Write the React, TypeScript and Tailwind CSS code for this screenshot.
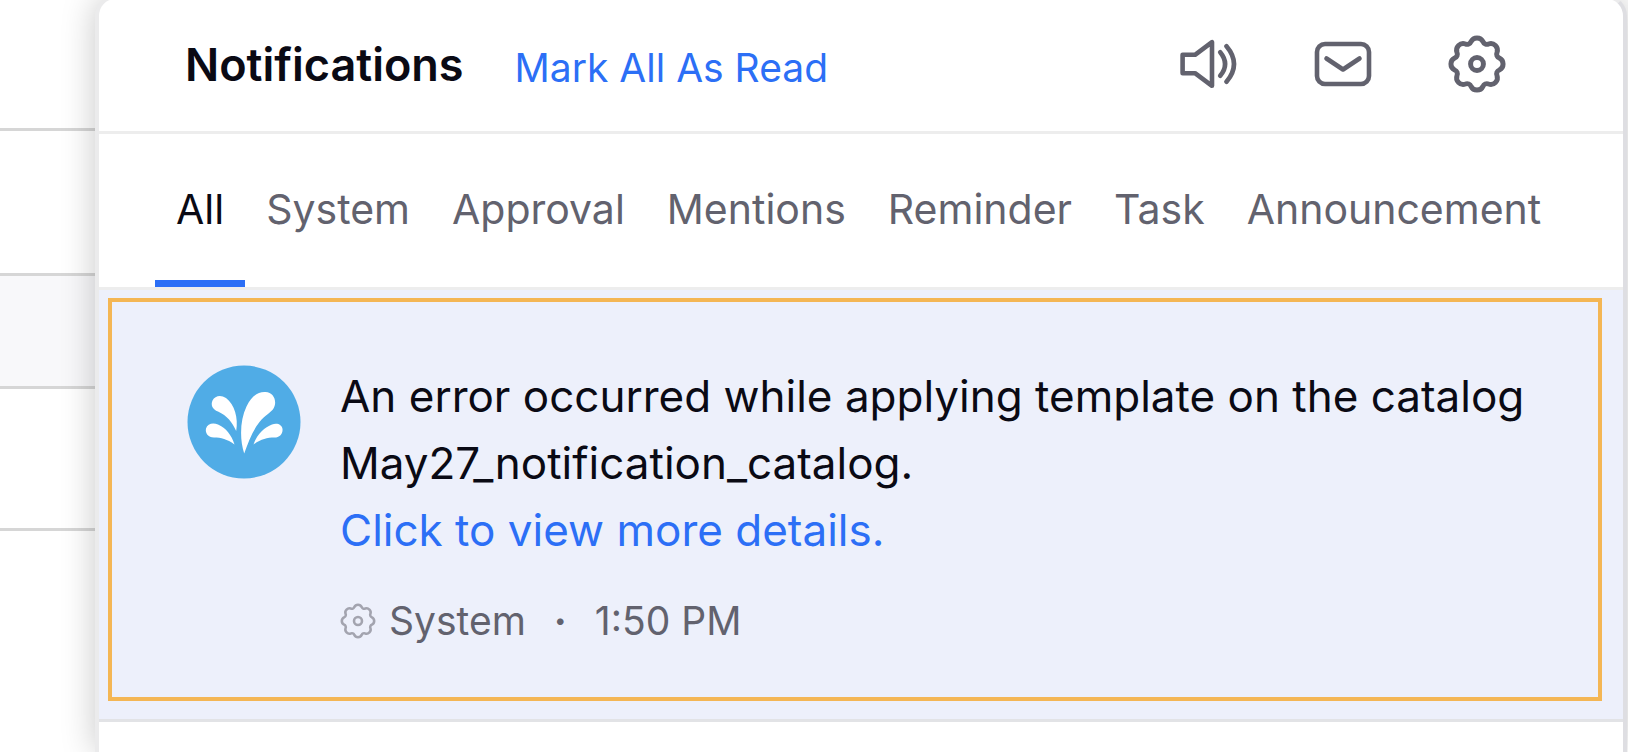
import { useState } from "react";

const tabs = ["All", "System", "Approval", "Mentions", "Reminder", "Task", "Announcement"];

// outline of a gear with eight rounded teeth, centred in a 56x56 box
function gearPath() {
  const point = (deg: number) => {
    const a = (deg * Math.PI) / 180;
    return `${(28 + 22.3 * Math.cos(a)).toFixed(2)} ${(28 + 22.3 * Math.sin(a)).toFixed(2)}`;
  };
  let d = `M${point(-15)}`;
  for (let i = 0; i < 8; i++) {
    d += `A6.4 6.4 0 0 1 ${point(i * 45 + 15)}A4 4 0 0 0 ${point(i * 45 + 30)}`;
  }
  return d + "Z";
}

function GearIcon({ className, strokeWidth = 4.8 }: { className: string; strokeWidth?: number }) {
  return (
    <svg viewBox="0 0 56 56" className={className} fill="none" stroke="currentColor" strokeWidth={strokeWidth} strokeLinejoin="round">
      <path d={gearPath()} />
      <circle cx="28" cy="28" r="6.2" />
    </svg>
  );
}

function SoundIcon() {
  return (
    <svg viewBox="0 0 58 50" className="w-[58px] h-[50px]" fill="none" stroke="currentColor" strokeWidth="4.6" strokeLinecap="round" strokeLinejoin="round">
      <path d="M2.6 15.8H15L32 3.2V46.8L15 34.2H2.6Z" />
      <path d="M40.2 13.2Q50 25 40.2 36.8" />
      <path d="M46.5 7.2Q61.5 25 46.5 42.8" />
    </svg>
  );
}

function MailIcon() {
  return (
    <svg viewBox="0 0 58 46" className="w-[58px] h-[46px]" fill="none" stroke="currentColor" strokeWidth="4.6" strokeLinecap="round" strokeLinejoin="round">
      <rect x="3" y="3" width="52" height="40" rx="8" />
      <path d="M12.5 17.5L29 28.5L45.5 17.5" />
    </svg>
  );
}

function Avatar() {
  return (
    <svg viewBox="0 0 114 114" className="w-[114px] h-[114px] shrink-0" aria-hidden="true">
      <circle cx="57" cy="57" r="56.5" fill="#50ace6" />
      <g fill="#fff">
        <path d="M57.2 88.5C52.5 74 53 55 59.5 41.5C64.5 31 71 26.500 78.500 27C87 27.500 90.500 36.500 86.500 43.500C84 47.500 78 50 72.500 57C65 66.500 61.500 77 57.2 88.500Z" />
        <path d="M49.2 66C45.5 57.5 40 50.500 31 46.500C25.500 44.500 23.500 40 25.500 35.500C28 30.500 34 29.600 39 33C47.500 39.500 51.500 53 49.200 66Z" />
        <path d="M47.5 79.5C40 74 34 72.600 27 72.500C21 72.500 18 68 19 63.500C20.500 58.500 26 57.500 31 59.500C39 63 44.500 70 47.500 79.500Z" />
        <path d="M66.5 79.5C70 69 77.500 62.500 85 59.500C90 57.500 95 59.500 95.500 64C96 69 92.500 72.500 87.500 72.500C80 72.600 74 74 66.500 79.500Z" />
      </g>
    </svg>
  );
}

export default function App() {
  const [active, setActive] = useState("All");

  return (
    <div className="flex min-h-screen overflow-hidden bg-white pr-px font-['Inter',sans-serif]">
      {/* Page behind the drawer */}
      <div className="w-[95px] shrink-0">
        <div className="h-[131px] border-b-3 border-[#d6d6d6]" />
        <div className="h-[145px] border-b-3 border-[#d6d6d6]" />
        <div className="h-[113px] border-b-3 border-[#d6d6d6] bg-[#f8f8fa]" />
        <div className="h-[142px] border-b-3 border-[#d6d6d6]" />
      </div>

      <section className="relative -mt-1 flex min-w-0 flex-1 flex-col overflow-hidden rounded-t-[20px] border-t-3 border-r-4 border-l-4 border-[#ebebec] border-r-[#dedee2] bg-white shadow-[0_0_34px_rgba(0,0,0,0.22)]">
        <header className="flex h-[135px] items-center border-b-3 border-[#ededed] pr-[117px] pl-[86px]">
          <h1 className="text-[45px] font-semibold text-[#0a0a14]">Notifications</h1>
          <button className="ml-[51px] pt-[6px] text-[39px] text-[#2c6ff6]">Mark All As Read</button>
          <div className="ml-auto flex items-center gap-[76px] pb-[2px] text-[#62626e]">
            <button aria-label="Sound"><SoundIcon /></button>
            <button aria-label="Mail"><MailIcon /></button>
            <button aria-label="Settings"><GearIcon className="size-[58px]" /></button>
          </div>
        </header>

        <nav className="flex h-[156px] border-b-3 border-[#ededed] pl-[56px]">
          {tabs.map((tab) => (
            <button
              key={tab}
              onClick={() => setActive(tab)}
              className={`border-b-7 px-[21px] pt-[6px] text-[41px] ${active === tab ? "border-[#2c6ff6] text-[#0a0a14]" : "border-transparent text-[#62626e]"}`}
            >
              {tab}
            </button>
          ))}
        </nav>

        <div className="border-b-3 border-[#e2e3e6] bg-[#edf0fb] pt-2 pr-[21px] pb-[18px] pl-[9px]">
          <article className="flex gap-[39px] border-4 border-[#f4b654] pr-[70px] pl-[75px] pt-[63px] pb-[48px]">
            <Avatar />
            <div className="-mt-[2px]">
              <p className="text-[44px] leading-[67px] whitespace-nowrap text-[#0a0a14]">
                An error occurred while applying template on the catalog
                <br />
                May27_notification_catalog.
                <br />
                <a href="#details" className="text-[#2c6ff6]">Click to view more details.</a>
              </p>
              <div className="mt-[29px] flex items-center text-[39px] leading-[56px] text-[#62626e]">
                <GearIcon className="mr-[13px] size-9 text-[#a3a4af]" strokeWidth={4} />
                <span>System</span>
                <span className="mx-7 font-bold">·</span>
                <span>1:50 PM</span>
              </div>
            </div>
          </article>
        </div>
      </section>
    </div>
  );
}
